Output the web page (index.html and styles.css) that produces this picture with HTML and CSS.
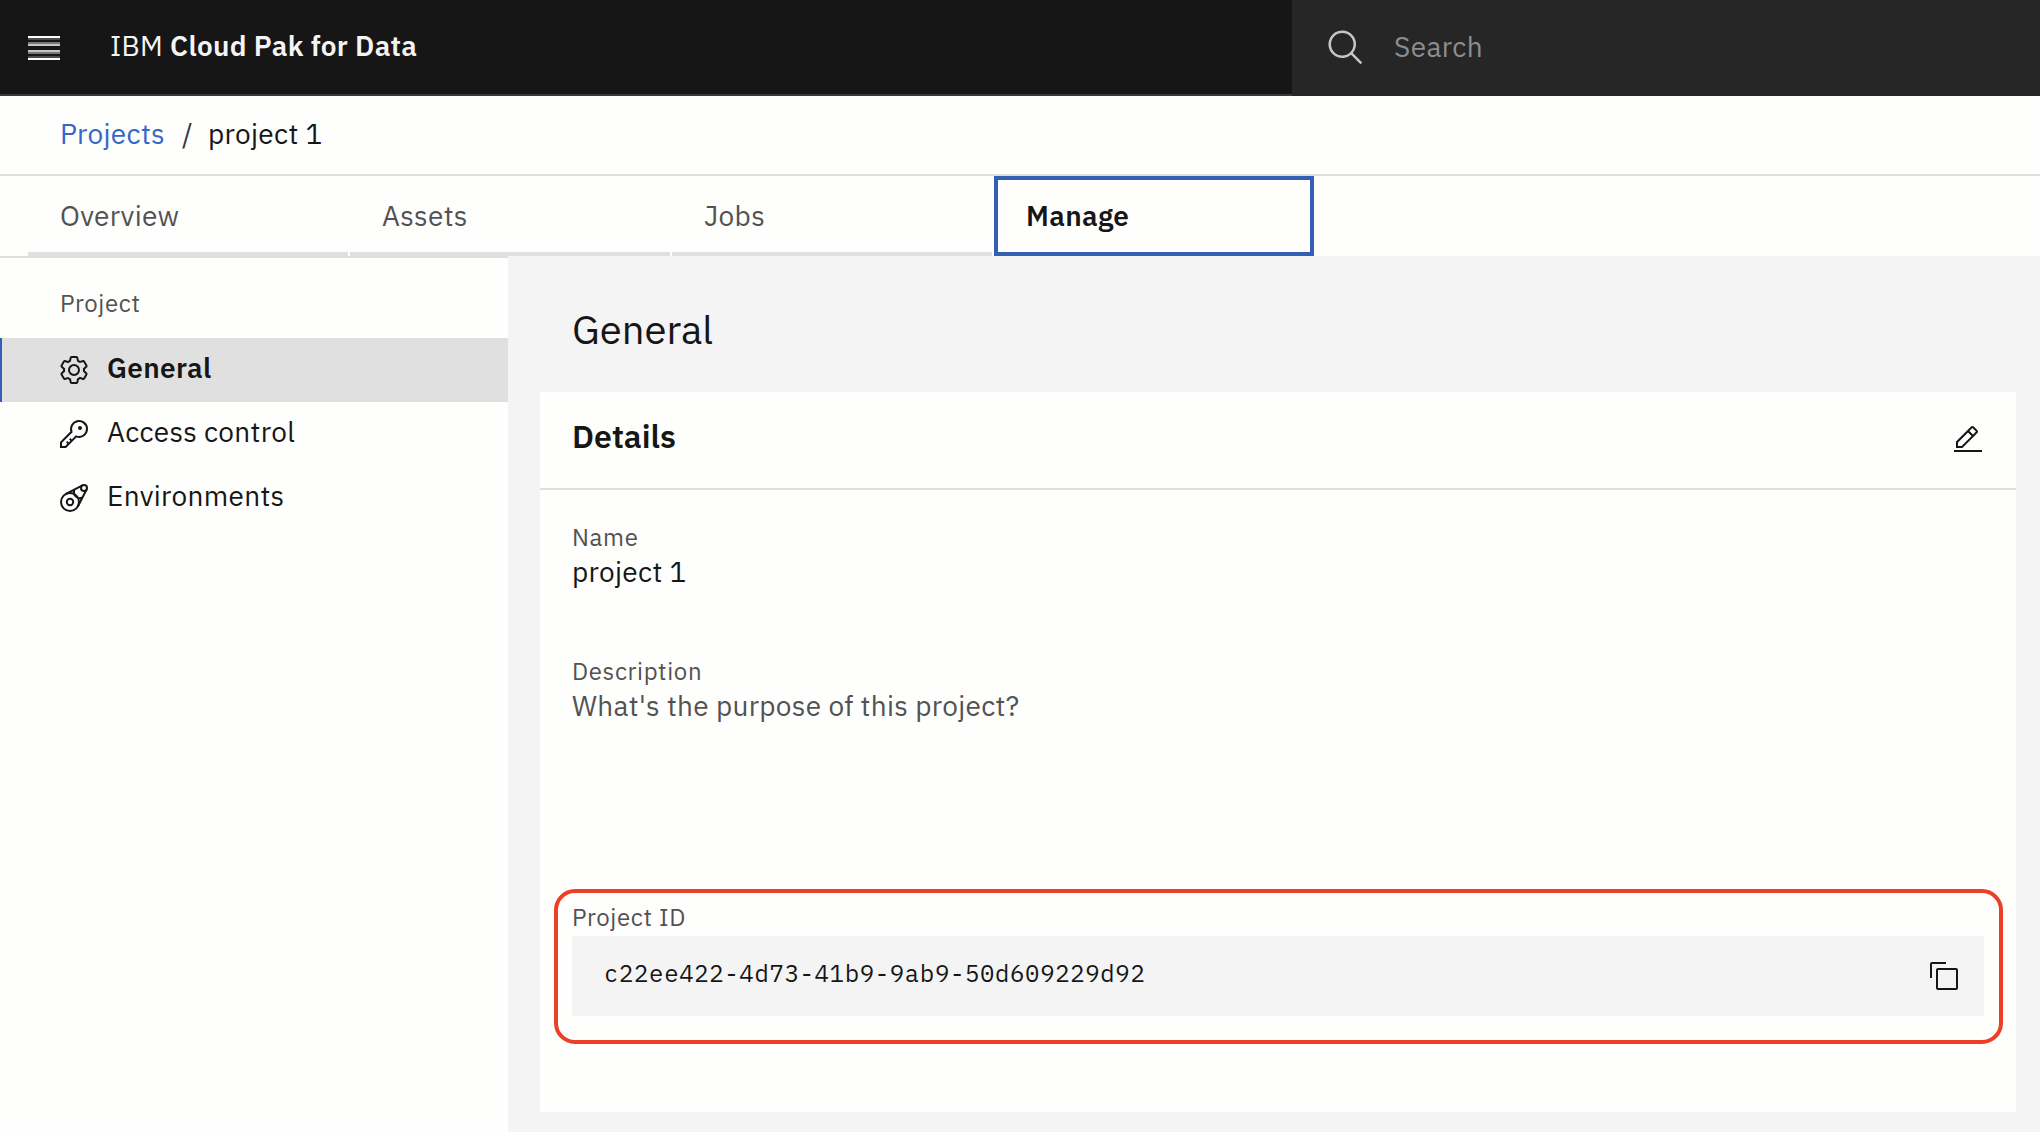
FILE: index.html
```html
<!DOCTYPE html>
<html lang="en">
<head>
<meta charset="utf-8">
<title>Cloud Pak for Data</title>
<link rel="stylesheet" href="styles.css">
</head>
<body>
<header class="header">
  <div class="brand-bar">
    <div class="menu"><i></i><i></i><i></i><i></i></div>
    <div class="brand">IBM <b class="brand-name">Cloud Pak for Data</b></div>
  </div>
  <div class="search">
    <svg class="search-icon" viewBox="0 0 32 32"><path d="M29,27.5859l-7.5521-7.5521a11.0177,11.0177,0,1,0-1.4141,1.4141L27.5859,29ZM4,13a9,9,0,1,1,9,9A9.01,9.01,0,0,1,4,13Z"/></svg>
    <span class="search-text">Search</span>
  </div>
</header>
<nav class="breadcrumb">
  <a class="crumb-link">Projects</a><span class="crumb-sep">/</span><span>project 1</span>
</nav>
<nav class="tabs">
  <div class="tab">Overview</div>
  <div class="tab">Assets</div>
  <div class="tab">Jobs</div>
  <div class="tab tab-active">Manage</div>
</nav>
<div class="layout">
  <aside class="sidebar">
    <div class="side-title">Project</div>
    <div class="side-item side-active">
      <svg class="icon" viewBox="0 0 32 32"><path d="M27,16.76c0-.25,0-.5,0-.76s0-.51,0-.77l1.92-1.68A2,2,0,0,0,29.3,11L26.94,7a2,2,0,0,0-1.73-1,2,2,0,0,0-.64.1l-2.43.82a11.35,11.35,0,0,0-1.31-.75l-.51-2.52a2,2,0,0,0-2-1.61H13.64a2,2,0,0,0-2,1.61l-.51,2.52a11.48,11.48,0,0,0-1.32.75L7.43,6.06A2,2,0,0,0,6.79,6,2,2,0,0,0,5.06,7L2.7,11a2,2,0,0,0,.41,2.51L5,15.24c0,.25,0,.5,0,.76s0,.51,0,.77L3.11,18.45A2,2,0,0,0,2.7,21L5.06,25a2,2,0,0,0,1.73,1,2,2,0,0,0,.64-.1l2.43-.82a11.35,11.35,0,0,0,1.31.75l.51,2.52a2,2,0,0,0,2,1.61h4.72a2,2,0,0,0,2-1.61l.51-2.52a11.48,11.48,0,0,0,1.32-.75l2.42.82a2,2,0,0,0,.64.1,2,2,0,0,0,1.73-1L29.3,21a2,2,0,0,0-.41-2.51ZM25.21,24l-3.43-1.16a8.86,8.86,0,0,1-2.71,1.57L18.36,28H13.64l-.71-3.55a9.36,9.36,0,0,1-2.7-1.57L6.79,24,4.43,20l2.72-2.4a8.9,8.9,0,0,1,0-3.13L4.43,12,6.79,8l3.43,1.16a8.86,8.86,0,0,1,2.71-1.57L13.64,4h4.72l.71,3.55a9.36,9.36,0,0,1,2.7,1.57L25.21,8,27.57,12l-2.72,2.4a8.9,8.9,0,0,1,0,3.13L27.57,20Z"/><path d="M16,22a6,6,0,1,1,6-6A5.94,5.94,0,0,1,16,22Zm0-10a3.91,3.91,0,0,0-4,4,3.91,3.91,0,0,0,4,4,3.91,3.91,0,0,0,4-4A3.91,3.91,0,0,0,16,12Z"/></svg>
      <span class="side-label">General</span>
    </div>
    <div class="side-item">
      <svg class="icon" viewBox="0 0 32 32"><path d="M21,2a8.9977,8.9977,0,0,0-8.6119,11.6118L2,24v6H8L18.3881,19.6118A9,9,0,1,0,21,2Zm0,16a7.0125,7.0125,0,0,1-2.0322-.3022L17.821,17.35l-.8472.8472-3.1811,3.1812L12.4141,20,11,21.4141l1.3787,1.3786-1.5859,1.586L9.4141,23,8,24.4141l1.3787,1.3786L7.1716,28H4V24.8284l9.8023-9.8023.8472-.8474-.3473-1.1467A7,7,0,1,1,21,18Z"/><circle cx="22" cy="10" r="2"/></svg>
      <span class="side-label">Access control</span>
    </div>
    <div class="side-item">
      <svg class="icon icon-line" viewBox="0 0 32 32"><circle cx="12" cy="20" r="9"/><circle cx="12" cy="20" r="3.2"/><circle cx="26" cy="6" r="3"/><path d="M7.5 12.2 24.5 3.4M19.8 24.5 28.6 7.5M16.2 8.2A6 6 0 0 0 23.8 15.8"/></svg>
      <span class="side-label">Environments</span>
    </div>
  </aside>
  <main class="main">
    <h1 class="page-title">General</h1>
    <section class="card">
      <div class="card-head">
        <h2 class="card-title">Details</h2>
        <svg class="icon" viewBox="0 0 32 32"><path d="M2 26H30V28H2zM25.4 9c.8-.8.8-2 0-2.8l-3.6-3.6c-.8-.8-2-.8-2.8 0l-15 15V24h6.4L25.4 9zM20.4 4 24 7.600l-3 3L17.400 7 20.400 4zM6 22v-3.600l10-10 3.600 3.600-10 10H6z"/></svg>
      </div>
      <div class="card-body">
        <div class="field">
          <div class="label">Name</div>
          <div class="value">project 1</div>
        </div>
        <div class="field">
          <div class="label">Description</div>
          <div class="value value-muted">What's the purpose of this project?</div>
        </div>
        <div class="id-field">
          <div class="label">Project ID</div>
          <div class="code-box">
            <code class="code">c22ee422-4d73-41b9-9ab9-50d609229d92</code>
            <svg class="icon" viewBox="0 0 32 32"><path d="M28,10V28H10V10H28m0-2H10a2,2,0,0,0-2,2V28a2,2,0,0,0,2,2H28a2,2,0,0,0,2-2V10a2,2,0,0,0-2-2Z"/><path d="M4,18H2V4A2,2,0,0,1,4,2H18V4H4Z"/></svg>
          </div>
          <div class="highlight"></div>
        </div>
      </div>
    </section>
  </main>
</div>
</body>
</html>
```
FILE: styles.css
```css
* { box-sizing: border-box; }
body {
  margin: 0;
  height: 1132px;
  display: flex;
  flex-direction: column;
  overflow: hidden;
  background: #fefefd;
  color: #161616;
  font: 400 28px/40px "IBM Plex Sans", Roboto, "Liberation Sans", sans-serif;
  letter-spacing: .32px;
  white-space: nowrap;
}
.icon { width: 32px; height: 32px; flex: none; fill: #161616; }
.icon-line { fill: none; stroke: #161616; stroke-width: 2; }

.header { display: flex; height: 96px; flex: none; background: #161616; color: #f4f4f4; }
.brand-bar { width: 1292px; display: flex; align-items: center; padding-left: 28px; border-bottom: 2px solid #393939; }
.menu { width: 32px; height: 24px; display: flex; flex-direction: column; gap: 2px; margin-top: 2px; }
.menu i { height: 4px; background: linear-gradient(#777 50%, #c4c4c4 50%); }
.menu i:nth-child(1) { background: linear-gradient(#fff 50%, #4c4c4c 50%); }
.menu i:nth-child(3) { margin-top: 2px; background: linear-gradient(#c4c4c4 50%, #777 50%); }
.menu i:nth-child(4) { background: linear-gradient(#4c4c4c 50%, #fff 50%); }
.brand { margin: 0 0 2px 50px; }
.brand-name { font-weight: 600; }
.search { flex: 1; display: flex; align-items: center; padding: 0 0 2px 34px; background: #262626; color: #8d8d8d; }
.search-icon { width: 40px; height: 40px; margin-top: 1px; fill: #c6c6c6; }
.search-text { margin: 0 0 1px 28px; letter-spacing: .4px; }

.breadcrumb { height: 80px; flex: none; display: flex; align-items: center; padding: 0 0 2px 60px; border-bottom: 2px solid #e0e0e0; }
.crumb-link { color: #3467c9; }
.crumb-sep { margin: 0 15px 0 17px; color: #393939; }

.tabs { height: 80px; flex: none; display: flex; gap: 2px; padding-left: 28px; }
.tab { width: 320px; padding: 20px 0 0 32px; color: #525252; border-bottom: 4px solid #e0e0e0; }
.tab-active { border: 4px solid #345fb7; padding: 16px 0 0 28px; font-weight: 600; color: #161616; }

.layout { flex: 1; display: flex; min-height: 0; }
.sidebar { width: 508px; border-top: 2px solid #e0e0e0; padding-top: 29px; }
.side-title { padding-left: 60px; margin-bottom: 19px; font-size: 24px; line-height: 32px; letter-spacing: .64px; color: #525252; }
.side-item { height: 64px; display: flex; align-items: center; padding-left: 58px; }
.side-label { margin: 0 0 4px 17px; }
.side-active { background: #e0e0e0; padding-left: 56px; border-left: 2px solid #345fb7; font-weight: 600; }

.main { flex: 1; background: #f4f4f4; padding: 0 24px 20px 32px; display: flex; flex-direction: column; }
.page-title { margin: 0; padding: 12px 0 1px 32px; font-size: 40px; font-weight: 400; line-height: 123px; letter-spacing: 0; }
.card { flex: 1; background: #fefefd; }
.card-head { height: 98px; display: flex; align-items: center; justify-content: space-between; padding: 0 32px; border-bottom: 2px solid #e0e0e0; }
.card-title { margin: 0 0 8px; font-size: 32px; font-weight: 600; letter-spacing: 0; }
.card-body { padding: 32px 32px 0; }
.field { margin-bottom: 64px; }
.label { font-size: 24px; line-height: 30px; letter-spacing: .64px; color: #525252; }
.value-muted { color: #525252; }
.id-field { position: relative; margin-top: 176px; }
.code-box { height: 80px; margin-top: 4px; background: #f4f4f4; display: flex; align-items: center; justify-content: space-between; padding: 0 24px 0 32px; }
.code { margin-bottom: 7px; font: 24px/40px "IBM Plex Mono", "Liberation Mono", monospace; letter-spacing: .64px; }
.highlight { position: absolute; left: -18px; right: -19px; top: -13px; height: 155px; border: 4px solid #ed3f27; border-radius: 21px; }
```
